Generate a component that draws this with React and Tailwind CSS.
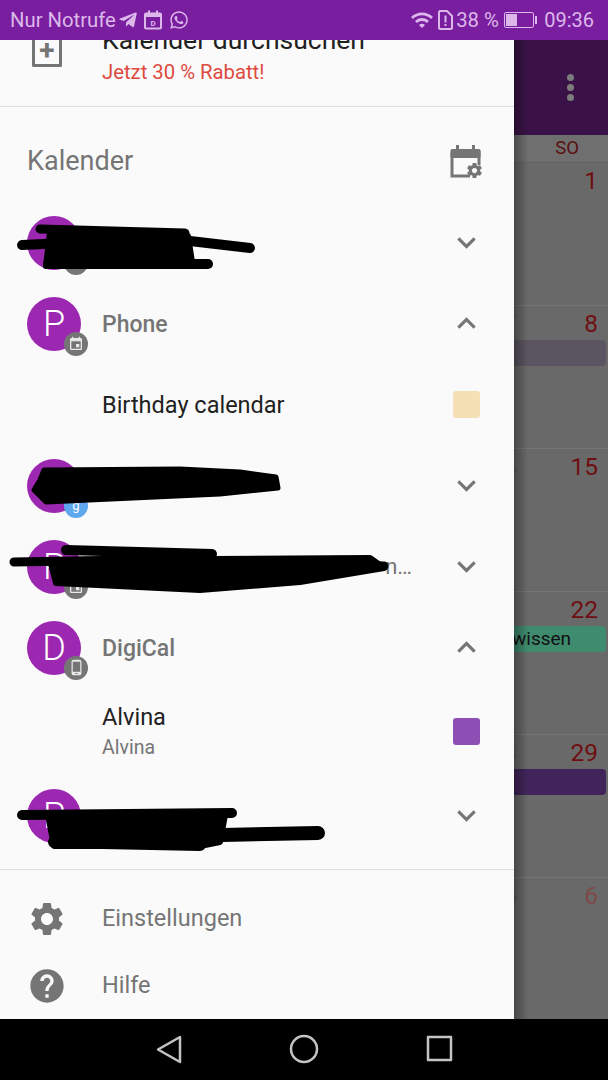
import React from 'react';
import { MdExpandMore, MdExpandLess, MdSettings, MdHelp, MdEvent, MdPhoneAndroid, MdWifi } from 'react-icons/md';
import { FaTelegramPlane, FaWhatsapp } from 'react-icons/fa';

const accounts = [
    { id: 1, letter: '', badge: 'calendar', open: false },
    { id: 2, letter: 'P', label: 'Phone', badge: 'calendar', open: true },
    { id: 3, child: 'Birthday calendar', swatch: 'bg-[#f5dfb5]' },
    { id: 4, letter: '', badge: 'google', open: false },
    { id: 5, letter: 'P', trailing: 'n…', badge: 'calendar', open: false },
    { id: 6, letter: 'D', label: 'DigiCal', badge: 'phone', open: true },
    { id: 7, child: 'Alvina', sub: 'Alvina', swatch: 'bg-[#8e4fb5]', tall: true },
    { id: 8, letter: 'P', badge: 'calendar', open: false },
];

const weeks = [
    { day: '1', prev: '' },
    { day: '8', prev: '7', event: { color: 'bg-[#5b5561]' } },
    { day: '15', prev: '4' },
    { day: '22', prev: '', event: { color: 'bg-[#3f8b6e]', text: 'wissen' } },
    { day: '29', prev: '8', event: { color: 'bg-[#41245a]' } },
    { day: '6', prev: '5', faded: true },
];

const Badge = ({ type }) => (
    <span className={`absolute left-[37px] top-[35px] flex h-6 w-6 items-center justify-center rounded-full ${type === 'google' ? 'bg-[#5ea8ee]' : 'bg-[#757575]'}`}>
        {type === 'calendar' && <MdEvent className="text-[#e8e8e8]" size={16} />}
        {type === 'phone' && <MdPhoneAndroid className="text-[#e8e8e8]" size={17} />}
        {type === 'google' && <span className="text-[13px] leading-none text-white">g</span>}
    </span>
);

const AccountRow = ({ item }) => {
    if (item.child) {
        return (
            <div className={`flex items-center pl-[102px] pr-[34px] ${item.tall ? 'h-[87px]' : 'h-[81px]'}`}>
                <div className="flex-1">
                    <div className="text-[23.5px] leading-[28px] text-[#212121]">{item.child}</div>
                    {item.sub && <div className="mt-[4px] text-[19.5px] leading-[26px] text-[#757575]">{item.sub}</div>}
                </div>
                <span className={`h-[27px] w-[27px] rounded-[3px] ${item.swatch}`} />
            </div>
        );
    }
    const Chevron = item.open ? MdExpandLess : MdExpandMore;
    return (
        <div className="flex h-[81px] items-center pl-[27px] pr-[29px]">
            <div className="relative h-[54px] w-[54px] shrink-0 rounded-full bg-[#9c27b0]">
                <span className="flex h-full items-center justify-center text-[36px] font-light text-white">{item.letter}</span>
                <Badge type={item.badge} />
            </div>
            <div className="flex-1 pl-[21px] pt-[3px] text-[23px] font-medium text-[#757575]">{item.label}</div>
            {item.trailing && <span className="mr-[36px] text-[22px] text-[#757575]">{item.trailing}</span>}
            <Chevron className="text-[#757575]" size={37} />
        </div>
    );
};

const CalendarGear = () => (
    <svg width="36" height="38" viewBox="0 0 36 38" fill="none">
        <path d="M3 9.5h27V22M21 33H3V9.5" stroke="#757575" strokeWidth="3" />
        <rect x="1.5" y="6" width="30" height="9" rx="1.5" fill="#757575" />
        <rect x="7" y="2" width="3" height="6" fill="#757575" />
        <rect x="23" y="2" width="3" height="6" fill="#757575" />
        <g transform="translate(16.5 18.5) scale(0.75)">
            <path fill="#757575" d="M19.43 12.98c.04-.32.07-.64.07-.98s-.03-.66-.07-.98l2.11-1.65c.19-.15.24-.42.12-.64l-2-3.46c-.12-.22-.39-.3-.61-.22l-2.49 1c-.52-.4-1.08-.73-1.69-.98l-.38-2.65C14.46 2.18 14.25 2 14 2h-4c-.25 0-.46.18-.49.42l-.38 2.65c-.61.25-1.17.59-1.69.98l-2.49-1c-.23-.09-.49 0-.61.22l-2 3.46c-.13.22-.07.49.12.64l2.11 1.65c-.04.32-.07.65-.07.98s.03.66.07.98l-2.11 1.65c-.19.15-.24.42-.12.64l2 3.46c.12.22.39.3.61.22l2.49-1c.52.4 1.08.73 1.69.98l.38 2.65c.03.24.24.42.49.42h4c.25 0 .46-.18.49-.42l.38-2.65c.61-.25 1.17-.59 1.69-.98l2.49 1c.23.09.49 0 .61-.22l2-3.46c.12-.22.07-.49-.12-.64l-2.11-1.65zM12 15.5c-1.93 0-3.5-1.57-3.5-3.5s1.57-3.5 3.5-3.5 3.5 1.57 3.5 3.5-1.57 3.5-3.5 3.5z" />
        </g>
    </svg>
);

const StatusBar = () => (
    <div className="flex h-10 shrink-0 items-center bg-[#791e9f] pl-[10px] pr-[14px] text-[20.3px] text-[#dcb8ea]">
        <span>Nur Notrufe</span>
        <FaTelegramPlane className="ml-[2px]" size={20} />
        <svg className="ml-[6px]" width="19" height="20" viewBox="0 0 19 20" fill="none">
            <rect x="1" y="3.5" width="16" height="15" rx="1" stroke="currentColor" strokeWidth="2" />
            <rect x="1" y="3" width="16" height="4" fill="currentColor" />
            <rect x="4" y="0.5" width="2" height="4" fill="currentColor" />
            <rect x="12" y="0.5" width="2" height="4" fill="currentColor" />
            <text x="9" y="16" textAnchor="middle" fontSize="8" fontWeight="700" fill="currentColor">D</text>
        </svg>
        <FaWhatsapp className="ml-[6px]" size={20} />
        <div className="flex-1" />
        <MdWifi size={24} />
        <svg className="ml-[3px]" width="16" height="20" viewBox="0 0 16 20">
            <path d="M3 1h7l5 5v11.5a1.5 1.5 0 0 1-1.5 1.5h-10A1.5 1.5 0 0 1 2 17.5V2.5A1.5 1.5 0 0 1 3 1z" fill="none" stroke="currentColor" strokeWidth="2" />
            <rect x="7.5" y="5.5" width="2" height="7" fill="currentColor" />
            <rect x="7.5" y="14" width="2" height="2" fill="currentColor" />
        </svg>
        <span className="ml-[3px] w-[44px] whitespace-nowrap">38 %</span>
        <div className="ml-[4px] flex items-center">
            <div className="h-[16px] w-[30px] rounded-[2px] border border-[#dcb8ea] p-[1px]">
                <div className="h-full w-[11px] bg-[#dcb8ea]" />
            </div>
            <span className="ml-[1px] h-[8px] w-[2px] bg-[#dcb8ea]" />
        </div>
        <span className="ml-[7px] text-[20px]">09:36</span>
    </div>
);

const Drawer = () => (
    <div className="flex w-[514px] shrink-0 flex-col overflow-hidden bg-[#fafafa]">
        <div className="flex h-[67px] shrink-0 border-b border-[#e0e0e0] pl-[32px]">
            <div className="-mt-[2px] h-[29px] w-[30px] rounded-b-[2px] border-[3px] border-t-0 border-[#757575] text-center text-[28px] font-bold leading-[26px] text-[#757575]">+</div>
            <div className="pl-[40px]">
                <div className="-mt-[15px] h-[26px] whitespace-nowrap text-[26.5px] leading-[30px] text-[#212121]">Kalender durchsuchen</div>
                <div className="mt-[8px] text-[20.3px] leading-[26px] text-[#de4a3f]">Jetzt 30 % Rabatt!</div>
            </div>
        </div>
        <div className="flex h-[95px] shrink-0 items-center justify-between pl-[27px] pr-[29px] pt-[14px]">
            <span className="text-[27px] text-[#757575]">Kalender</span>
            <CalendarGear />
        </div>
        {accounts.map((item) => (
            <AccountRow key={item.id} item={item} />
        ))}
        <div className="mt-[13px] border-t border-[#e0e0e0] pt-[15px]">
            <div className="flex h-[67px] items-center pl-[27px]">
                <MdSettings className="text-[#757575]" size={40} />
                <span className="pl-[35px] text-[23.5px] text-[#757575]">Einstellungen</span>
            </div>
            <div className="flex h-[67px] items-center pl-[27px]">
                <MdHelp className="text-[#757575]" size={40} />
                <span className="pl-[35px] text-[23.5px] text-[#757575]">Hilfe</span>
            </div>
        </div>
    </div>
);

const CalendarBehind = () => (
    <div className="relative flex-1 overflow-hidden bg-[#696969]">
        <div className="flex h-[95px] items-center justify-center bg-[#3a1247] pl-[18px]">
            <div className="flex flex-col gap-[3px]">
                <span className="h-[7px] w-[7px] rounded-full bg-[#7c7c7c]" />
                <span className="h-[7px] w-[7px] rounded-full bg-[#7c7c7c]" />
                <span className="h-[7px] w-[7px] rounded-full bg-[#7c7c7c]" />
            </div>
        </div>
        <div className="flex h-[28px] items-center justify-end border-b border-[#626262] bg-[#6f6f6f] pr-[29px] text-[18.5px] text-[#5a0f12]">SO</div>
        {weeks.map((week) => (
            <div key={week.day} className="h-[143px] border-b border-[#757575]">
                <div className="flex h-[37px] items-center justify-between pr-[10px] text-[24.5px]">
                    <span className="-ml-[11px] text-[#5a5a5a]">{week.prev}</span>
                    <span className={week.faded ? 'text-[#7d4a4a]' : 'text-[#6e0f12]'}>{week.day}</span>
                </div>
                {week.event && (
                    <div className={`mt-[-3px] mr-[2px] -ml-[2px] h-[26px] rounded-r-[4px] text-[19px] leading-[26px] text-[#111111] ${week.event.color}`}>{week.event.text}</div>
                )}
            </div>
        ))}
        <div className="absolute inset-y-0 left-0 w-[14px] bg-gradient-to-r from-[#00000055] to-transparent" />
    </div>
);

const NavBar = () => (
    <div className="flex h-[61px] shrink-0 items-center bg-black">
        <svg width="608" height="61" viewBox="0 0 608 61" fill="none" stroke="#c4c4c4" strokeWidth="2.5" strokeLinejoin="round">
            <path d="M180 18v25L158 30.5z" />
            <circle cx="304" cy="30" r="13" />
            <rect x="428" y="18" width="23" height="23" />
        </svg>
    </div>
);

// the black marker strokes somebody drew over the account names
const Scribbles = () => (
    <svg className="pointer-events-none absolute left-0 top-0" width="608" height="1080" viewBox="0 0 608 1080" fill="none" stroke="#000" strokeLinecap="round" strokeLinejoin="round">
        <path d="M40 229L185 233" strokeWidth="9" />
        <path d="M22 245L130 240L190 241L250 248" strokeWidth="10" />
        <path d="M50 232L188 236L192 262L46 266Z" fill="#000" strokeWidth="6" />
        <path d="M48 264L208 264" strokeWidth="10" />

        <path d="M44 470L180 469L240 472L276 477L278 488L220 494L46 502L34 490L40 480Z" fill="#000" strokeWidth="5" />

        <path d="M66 550L212 554" strokeWidth="10" />
        <path d="M14 562L130 560L384 566" strokeWidth="9" />
        <path d="M50 560L370 558L384 568L300 582L200 590L56 583Z" fill="#000" strokeWidth="6" />

        <path d="M22 815L232 813" strokeWidth="10" />
        <path d="M48 815L225 815L220 842L200 846L54 846Z" fill="#000" strokeWidth="6" />
        <path d="M54 842L200 845" strokeWidth="12" />
        <path d="M120 836L222 835L318 833" strokeWidth="14" />
    </svg>
);

const App = () => {
    return (
        <div className="relative flex h-[1080px] w-[608px] flex-col overflow-hidden font-['Roboto',sans-serif]">
            <StatusBar />
            <div className="flex min-h-0 flex-1">
                <Drawer />
                <CalendarBehind />
            </div>
            <NavBar />
            <Scribbles />
        </div>
    );
};

export default App;
